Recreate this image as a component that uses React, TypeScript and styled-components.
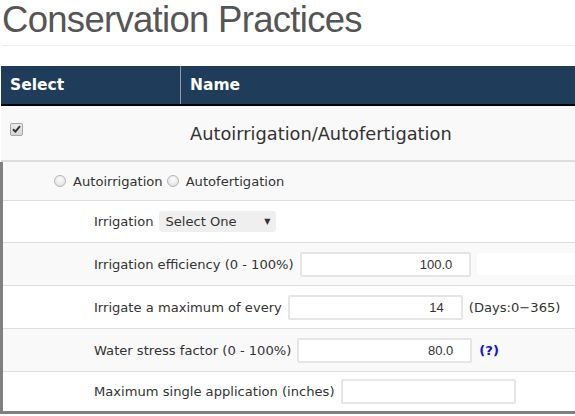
import React from "react";
import styled, { createGlobalStyle } from "styled-components";

const Global = createGlobalStyle`
  html, body { margin: 0; padding: 0; background: #fff; }
  body { font-family: "DejaVu Sans", Verdana, sans-serif; color: #333; overflow: hidden; }
`;

const Page = styled.div`
  width: 575px;
  height: 416px;
  overflow: hidden;
  padding-left: 1px;
  box-sizing: border-box;
`;

const Title = styled.h1`
  margin: 0 0 0 1px;
  font-family: "Liberation Sans", Arial, sans-serif;
  font-weight: 400;
  font-size: 36.5px;
  letter-spacing: -0.7px;
  line-height: 40px;
  color: #555;
  white-space: nowrap;
`;

const Rule = styled.hr`
  margin: 5px 0 0 1px;
  border: 0;
  border-top: 1px solid #eee;
`;

const Table = styled.div`
  margin-top: 20px;
  width: 600px;
`;

const HeadRow = styled.div`
  display: flex;
  height: 38px;
  background: #1f3d5b;
  border-bottom: 2px solid #000;
`;

const HeadCell = styled.div<{ $w?: number; $divider?: boolean }>`
  display: flex;
  align-items: center;
  padding-left: 9px;
  width: ${(p) => (p.$w ? `${p.$w}px` : "auto")};
  flex: ${(p) => (p.$w ? "none" : "1")};
  border-right: ${(p) => (p.$divider ? "1px solid #8d9cab" : "none")};
  color: #fff;
  font-weight: 700;
  font-size: 15.5px;
  box-sizing: border-box;
`;

const PracticeRow = styled.div`
  display: flex;
  height: 54px;
  background: #f9f9f9;
  border-bottom: 2px solid #ddd;
`;

const SelectCell = styled.div`
  width: 180px;
  padding: 12px 0 0 9px;
  box-sizing: border-box;
`;

const NameCell = styled.div`
  flex: 1;
  display: flex;
  align-items: center;
  padding: 1px 0 0 9px;
  font-size: 17.8px;
  color: #333;
`;

const Check = styled.span`
  display: inline-flex;
  align-items: center;
  justify-content: center;
  width: 11px;
  height: 11px;
  border: 1px solid #a6a6a6;
  border-radius: 2px;
  background: linear-gradient(#ececec, #d6d6d6);
`;

const Details = styled.div`
  border-left: 3px solid #808080;
  border-bottom: 3px solid #808080;
  margin-left: -1px;
  width: 575px;
  box-sizing: border-box;
`;

const Row = styled.div<{ $h: number; $striped?: boolean; $indent?: number; $first?: boolean }>`
  display: flex;
  align-items: center;
  gap: 6px;
  height: ${(p) => p.$h}px;
  padding-left: ${(p) => p.$indent ?? 91}px;
  background: ${(p) => (p.$striped ? "#f9f9f9" : "#fff")};
  border-top: ${(p) => (p.$first ? "none" : "1px solid #ddd")};
  font-size: 13.1px;
  white-space: nowrap;
  box-sizing: content-box;
`;

const RadioLabel = styled.label`
  display: inline-flex;
  align-items: center;
  gap: 7px;
  margin-right: -2px;
`;

const Radio = styled.span`
  display: inline-block;
  width: 10px;
  height: 10px;
  border: 1px solid #b5b5b5;
  border-radius: 50%;
  background: radial-gradient(circle at 50% 35%, #fdfdfd 0%, #e2e2e2 80%);
`;

const SelectBox = styled.div`
  display: flex;
  align-items: center;
  justify-content: space-between;
  width: 117px;
  height: 21px;
  padding: 0 6px;
  box-sizing: border-box;
  background: #efefef;
  border-radius: 3px;
  font-size: 13.1px;
`;

const Caret = styled.span`
  font-size: 8px;
  color: #333;
`;

const NumInput = styled.div`
  width: 175px;
  height: 25px;
  border: 2px solid #e5e5e5;
  border-radius: 2px;
  box-sizing: border-box;
  background: #fff;
  display: flex;
  align-items: center;
  justify-content: flex-end;
  padding-right: 17px;
  font-family: "Liberation Sans", Arial, sans-serif;
  font-size: 13px;
  color: #333;
`;

const BlankBox = styled.div`
  width: 100px;
  height: 22px;
  background: #fff;
`;

const Help = styled.span`
  color: #1010e0;
  font-weight: 700;
  margin-left: 1px;
`;

export default function App() {
  return (
    <Page>
      <Global />
      <Title>Conservation Practices</Title>
      <Rule />
      <Table>
        <HeadRow>
          <HeadCell $w={180} $divider>Select</HeadCell>
          <HeadCell>Name</HeadCell>
        </HeadRow>
        <PracticeRow>
          <SelectCell>
            <Check>
              <svg width="9" height="8" viewBox="0 0 9 8">
                <path d="M1 4.2 L3.4 6.6 L8 1.2" fill="none" stroke="#333" strokeWidth="2" />
              </svg>
            </Check>
          </SelectCell>
          <NameCell>Autoirrigation/Autofertigation</NameCell>
        </PracticeRow>
        <Details>
          <Row $h={38} $striped $indent={51} $first>
            <RadioLabel>
              <Radio />
              Autoirrigation
            </RadioLabel>
            <RadioLabel>
              <Radio />
              Autofertigation
            </RadioLabel>
          </Row>
          <Row $h={41}>
            Irrigation
            <SelectBox>
              Select One <Caret>▼</Caret>
            </SelectBox>
          </Row>
          <Row $h={42} $striped>
            Irrigation efficiency (0 - 100%)
            <NumInput>100.0</NumInput>
            <BlankBox />
          </Row>
          <Row $h={42}>
            Irrigate a maximum of every
            <NumInput>14</NumInput>
            (Days:0−365)
          </Row>
          <Row $h={42} $striped>
            Water stress factor (0 - 100%)
            <NumInput>80.0</NumInput>
            <Help>(?)</Help>
          </Row>
          <Row $h={39}>
            Maximum single application (inches)
            <NumInput />
          </Row>
        </Details>
      </Table>
    </Page>
  );
}
